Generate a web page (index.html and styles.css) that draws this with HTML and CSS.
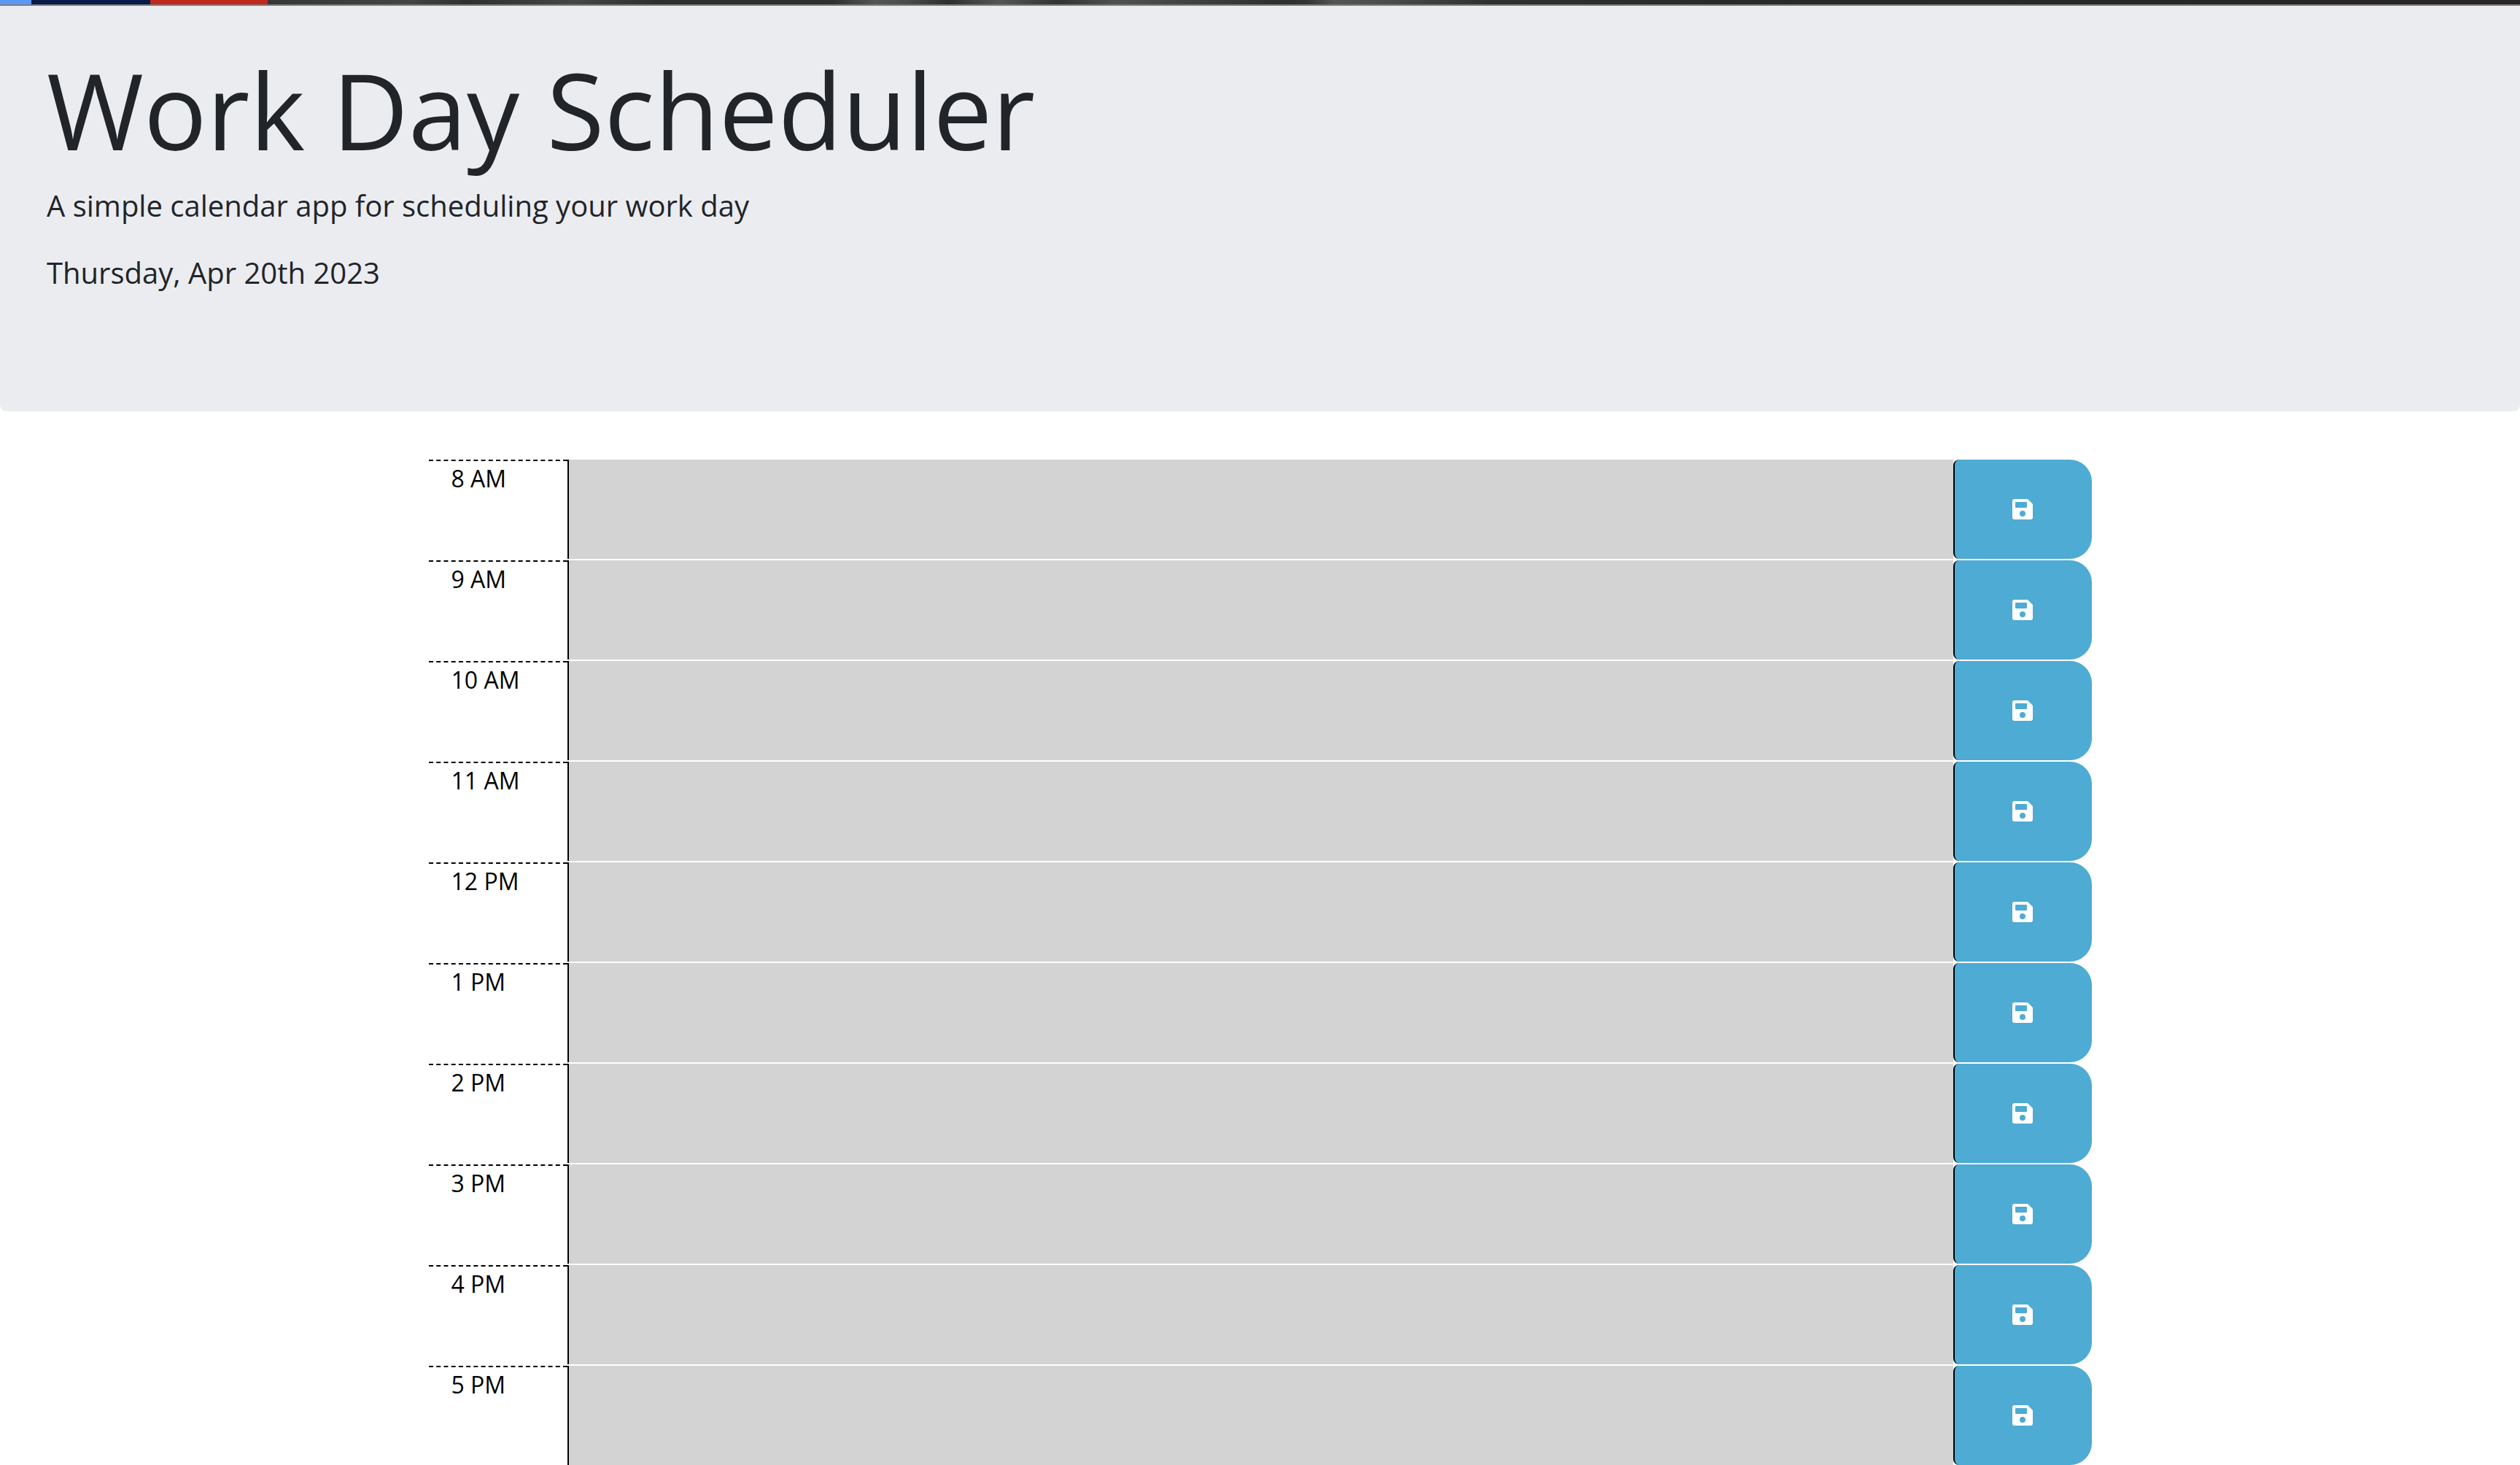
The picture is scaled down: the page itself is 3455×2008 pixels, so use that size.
FILE: index.html
```html
<!DOCTYPE html>
<html lang="en">
<head>
  <meta charset="utf-8">
  <meta name="viewport" content="width=device-width, initial-scale=1">
  <title>Work Day Scheduler</title>
  <link rel="stylesheet" href="styles.css">
</head>
<body>
  <svg class="sprite" aria-hidden="true">
    <symbol id="save" viewBox="0 0 28 28">
      <path fill-rule="evenodd" d="M3 0H21L28 7V25a3 3 0 0 1-3 3H3a3 3 0 0 1-3-3V3a3 3 0 0 1 3-3zM5 4a1 1 0 0 0-1 1v6a1 1 0 0 0 1 1h14a1 1 0 0 0 1-1V5a1 1 0 0 0-1-1zM14 16a4 4 0 1 0 0 8a4 4 0 0 0 0-8z"/>
    </symbol>
  </svg>

  <div class="top-strip"></div>

  <header class="hero">
    <h1 class="hero-title">Work Day Scheduler</h1>
    <p class="hero-text">A simple calendar app for scheduling your work day</p>
    <p class="hero-text">Thursday, Apr 20th 2023</p>
  </header>

  <main class="schedule">
    <div class="time-block">
      <label class="hour" for="hour-8">8 AM</label>
      <textarea class="description" id="hour-8"></textarea>
      <button class="save-btn" type="button" aria-label="Save 8 AM"><svg class="icon"><use href="#save"/></svg></button>
    </div>
    <div class="time-block">
      <label class="hour" for="hour-9">9 AM</label>
      <textarea class="description" id="hour-9"></textarea>
      <button class="save-btn" type="button" aria-label="Save 9 AM"><svg class="icon"><use href="#save"/></svg></button>
    </div>
    <div class="time-block">
      <label class="hour" for="hour-10">10 AM</label>
      <textarea class="description" id="hour-10"></textarea>
      <button class="save-btn" type="button" aria-label="Save 10 AM"><svg class="icon"><use href="#save"/></svg></button>
    </div>
    <div class="time-block">
      <label class="hour" for="hour-11">11 AM</label>
      <textarea class="description" id="hour-11"></textarea>
      <button class="save-btn" type="button" aria-label="Save 11 AM"><svg class="icon"><use href="#save"/></svg></button>
    </div>
    <div class="time-block">
      <label class="hour" for="hour-12">12 PM</label>
      <textarea class="description" id="hour-12"></textarea>
      <button class="save-btn" type="button" aria-label="Save 12 PM"><svg class="icon"><use href="#save"/></svg></button>
    </div>
    <div class="time-block">
      <label class="hour" for="hour-13">1 PM</label>
      <textarea class="description" id="hour-13"></textarea>
      <button class="save-btn" type="button" aria-label="Save 1 PM"><svg class="icon"><use href="#save"/></svg></button>
    </div>
    <div class="time-block">
      <label class="hour" for="hour-14">2 PM</label>
      <textarea class="description" id="hour-14"></textarea>
      <button class="save-btn" type="button" aria-label="Save 2 PM"><svg class="icon"><use href="#save"/></svg></button>
    </div>
    <div class="time-block">
      <label class="hour" for="hour-15">3 PM</label>
      <textarea class="description" id="hour-15"></textarea>
      <button class="save-btn" type="button" aria-label="Save 3 PM"><svg class="icon"><use href="#save"/></svg></button>
    </div>
    <div class="time-block">
      <label class="hour" for="hour-16">4 PM</label>
      <textarea class="description" id="hour-16"></textarea>
      <button class="save-btn" type="button" aria-label="Save 4 PM"><svg class="icon"><use href="#save"/></svg></button>
    </div>
    <div class="time-block">
      <label class="hour" for="hour-17">5 PM</label>
      <textarea class="description" id="hour-17"></textarea>
      <button class="save-btn" type="button" aria-label="Save 5 PM"><svg class="icon"><use href="#save"/></svg></button>
    </div>
  </main>
</body>
</html>
```

FILE: styles.css
```css
* {
  box-sizing: border-box;
}

body {
  margin: 0;
  background: #fff;
  color: #212529;
  font-family: "Open Sans", sans-serif;
  font-size: 32px;
  line-height: 48px;
}

.sprite {
  display: none;
}

.top-strip {
  height: 8px;
  border-bottom: 2px solid #7f7f7f;
  background: linear-gradient(to right,
    #5b98f5 43px, #081b46 43px, #081b46 206px,
    #bf291e 206px, #bf291e 367px, #363636 367px,
    #444 560px, #303030 640px, #454545 790px, #2e2e2e 900px,
    #2f2f2f 1140px, #555 1200px, #4c4c4c 1240px, #2f2f2f 1300px,
    #555 1370px, #333 1450px, #505050 1530px, #2f2f2f 1750px,
    #333 1790px, #555 1830px, #4c4c4c 1900px, #303030 2040px,
    #292929 2400px, #272525 100%);
}

.hero {
  padding: 56px 64px 128px;
  border-radius: 0 0 9px 9px;
  background: #ebecf0;
}

.hero-title {
  margin: 0 0 16px;
  font-size: 144px;
  font-weight: 400;
  line-height: 172px;
}

.hero-text {
  margin: 0 0 32px;
  font-size: 40px;
  line-height: 60px;
}

.schedule {
  display: flex;
  flex-direction: column;
  gap: 2px;
  max-width: 2280px;
  margin: 66px auto 0;
}

.time-block {
  display: grid;
  grid-template-columns: 1fr 10fr 1fr;
  min-height: 136px;
}

.hour {
  padding: 0 31px;
  border-top: 2px dashed #000;
  color: #000;
}

.description {
  width: 100%;
  height: 100%;
  margin: 0;
  padding: 4px;
  border: 0;
  border-left: 2px solid #000;
  border-radius: 0;
  outline: 0;
  background: #d3d3d3;
  color: #000;
  font: inherit;
  resize: none;
}

.save-btn {
  display: flex;
  align-items: center;
  justify-content: center;
  padding: 0 2px 0 0;
  border: 0;
  border-left: 2px solid #000;
  border-radius: 8px 30px 30px 8px;
  background: #4eabd3;
  color: #fff;
  cursor: pointer;
}

.icon {
  width: 28px;
  height: 28px;
  fill: currentColor;
}
```
